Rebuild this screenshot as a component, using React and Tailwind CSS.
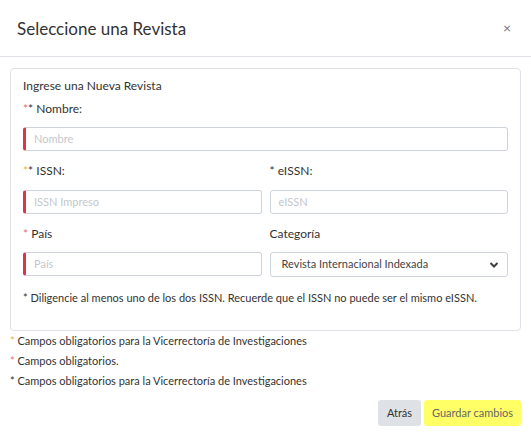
import React from "react";

const font = { fontFamily: 'Lato, "Open Sans", sans-serif' };

function Label({ children }) {
  return <div className="h-[18px] leading-[18px] text-[12px] text-[#333]">{children}</div>;
}

function Input({ placeholder, red }) {
  return (
    <div
      className={
        "h-[24px] rounded-[3px] border border-[#ced4da] flex items-center pl-[8px] text-[11px] text-[#c3c7cc] " +
        (red ? "border-l-[3px] border-l-[#dc3545]" : "")
      }
    >
      {placeholder}
    </div>
  );
}

export default function App() {
  return (
    <div className="w-[531px] h-[446px] bg-white" style={font}>
      <div className="h-[57px] border-b border-[#dee2e6] flex items-center justify-between pl-[17px] pr-[20px]">
        <div className="text-[17px] text-[#333] leading-none">Seleccione una Revista</div>
        <div className="text-[14px] text-[#777] leading-none">×</div>
      </div>
      <div className="pt-[11px] px-[10px]">
        <div className="border border-[#dee2e6] rounded-[4px] px-[12px] pt-[8px] pb-[23px]">
          <Label>Ingrese una Nueva Revista</Label>
          <div className="mt-[5px]">
            <Label>
              <span className="text-[#e57373]">*</span>* Nombre:
            </Label>
          </div>
          <div className="mt-[9px]">
            <Input placeholder="Nombre" red />
          </div>
          <div className="grid grid-cols-2 gap-x-[8px] mt-[11px]">
            <Label>
              <span className="text-[#f0ad4e]">*</span>* ISSN:
            </Label>
            <Label>* eISSN:</Label>
          </div>
          <div className="grid grid-cols-2 gap-x-[8px] mt-[10px]">
            <Input placeholder="ISSN Impreso" red />
            <Input placeholder="eISSN" />
          </div>
          <div className="grid grid-cols-2 gap-x-[8px] mt-[11px]">
            <Label>
              <span className="text-[#e57373]">*</span> País
            </Label>
            <Label>Categoría</Label>
          </div>
          <div className="grid grid-cols-2 gap-x-[8px] mt-[9px]">
            <Input placeholder="País" red />
            <div className="h-[25px] rounded-[3px] border border-[#ced4da] flex items-center justify-between pl-[11px] pr-[8px] text-[11px] text-[#444]">
              <span>Revista Internacional Indexada</span>
              <svg width="10" height="8" viewBox="0 0 10 8">
                <path d="M1.5 2 L5 5.5 L8.5 2" fill="none" stroke="#3a3f44" strokeWidth="2" />
              </svg>
            </div>
          </div>
          <div className="mt-[12px] h-[18px] leading-[18px] text-[11px] text-[#333]">
            * Diligencie al menos uno de los dos ISSN. Recuerde que el ISSN no puede ser el mismo eISSN.
          </div>
        </div>
        <div className="text-[11px] text-[#333]">
          <div className="h-[20px] leading-[20px]">
            <span className="text-[#f0ad4e]">*</span> Campos obligatorios para la Vicerrectoría de Investigaciones
          </div>
          <div className="h-[20px] leading-[20px]">
            <span className="text-[#e57373]">*</span> Campos obligatorios.
          </div>
          <div className="h-[20px] leading-[20px]">* Campos obligatorios para la Vicerrectoría de Investigaciones</div>
        </div>
        <div className="flex justify-end gap-[3px] mt-[9px]">
          <div className="h-[26px] w-[43px] rounded-[3px] bg-[#dee2e6] text-[11px] text-[#333] flex items-center justify-center">
            Atrás
          </div>
          <div className="h-[26px] w-[97px] rounded-[3px] bg-[#ffff66] text-[11px] text-[#666] flex items-center justify-center">
            Guardar cambios
          </div>
        </div>
      </div>
    </div>
  );
}
